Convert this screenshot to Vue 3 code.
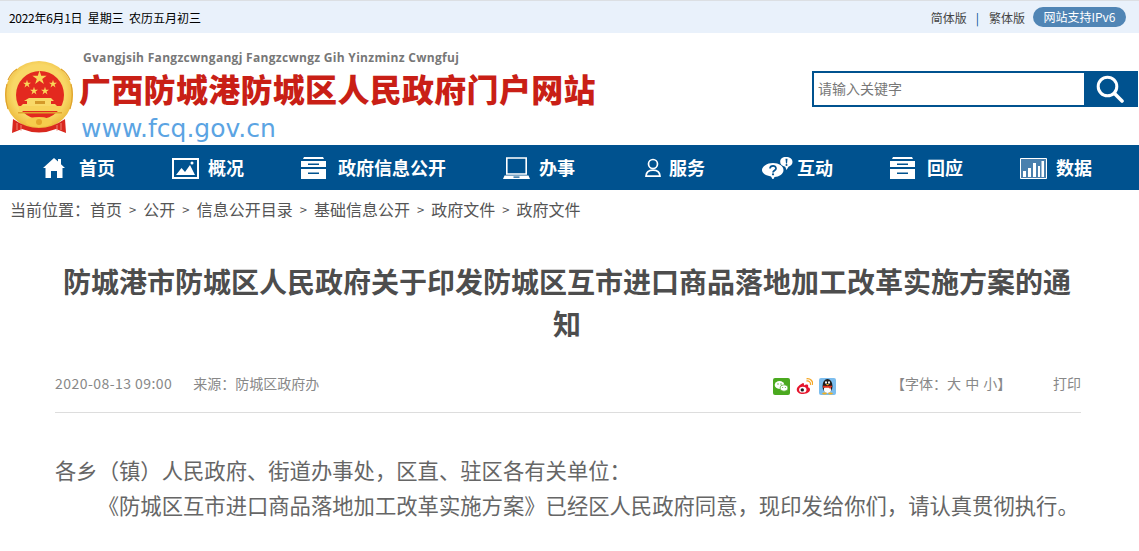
<template>
  <div class="page">
    <!-- 顶部日期条 -->
    <div class="topbar">
      <span class="date"><b class="date-day">2022年6月1日</b>&nbsp;&nbsp;星期三&nbsp;&nbsp;农历五月初三</span>
      <div class="topbar-right">
        <a class="lang">简体版</a>
        <i class="lang-sep">|</i>
        <a class="lang">繁体版</a>
        <span class="ipv6">网站支持IPv6</span>
      </div>
    </div>

    <!-- 网站头部 -->
    <header class="header">
      <svg class="emblem" viewBox="0 0 70 74" width="70" height="74">
        <defs>
          <radialGradient id="gold" cx="50%" cy="45%" r="55%">
            <stop offset="72%" stop-color="#f8d766" />
            <stop offset="100%" stop-color="#ecb93a" />
          </radialGradient>
          <path id="star" d="M0-1L.225-.309H.951L.363.118.588.809 0 .382-.588.809-.363.118-.951-.309H-.225z" />
        </defs>
        <circle cx="35" cy="35" r="34" fill="url(#gold)" />
        <path d="M3 24Q0 36 4 49M67 24Q70 36 66 49M13 9Q7 13 4 20M57 9Q63 13 66 20" stroke="#dfa32c" stroke-width="1.200" fill="none" />
        <circle cx="36" cy="35" r="24" fill="#e3291f" />
        <g fill="#f9d75a">
          <use href="#star" transform="translate(35.500 18) scale(7.500)" />
          <use href="#star" transform="translate(23 24) scale(4.200)" />
          <use href="#star" transform="translate(49 24) scale(4.200)" />
          <use href="#star" transform="translate(30 31) scale(4.200)" />
          <use href="#star" transform="translate(41 31) scale(4.200)" />
        </g>
        <path d="M25 38h22l3 3h-3v3h4l2 2H17l2-2h4v-3h-3z" fill="#f9d968" />
        <path d="M15 46h42v5H15z" fill="#f7d25a" />
        <path d="M31 41h10v3H31z" fill="#d49a2a" />
        <path d="M14 52h44v1.500H14z" fill="#dfa32c" />
        <path d="M9 59Q22 68 35 68T61 59L62 73 52 69Q35 76 18 69L8 73z" fill="#d9281e" />
        <path d="M13 63v7M17 65v6M53 65v6M57 63v7" stroke="#f3a08a" stroke-width=".8" />
        <ellipse cx="35" cy="62" rx="13" ry="5" fill="#f6cd4c" />
        <circle cx="35" cy="62" r="3" fill="#e4a62a" />
      </svg>
      <div class="brand">
        <p class="brand-zhuang">Gvangjsih Fangzcwngangj Fangzcwngz Gih Yinzminz Cwngfuj</p>
        <h1 class="brand-name">广西防城港防城区人民政府门户网站</h1>
        <p class="brand-url">www.fcq.gov.cn</p>
      </div>
      <div class="search">
        <input class="search-input" type="text" placeholder="请输入关键字" />
        <button class="search-btn" aria-label="搜索">
          <svg viewBox="0 0 28 28" width="28" height="28">
            <circle cx="11.500" cy="11.500" r="9.300" fill="none" stroke="#fff" stroke-width="3" />
            <path d="M18.500 18.500L26 26" stroke="#fff" stroke-width="3.600" stroke-linecap="round" />
          </svg>
        </button>
      </div>
    </header>

    <!-- 主导航 -->
    <nav class="nav">
      <a class="nav-item gap-14">
        <svg viewBox="0 0 22 22" width="22" height="22">
          <path fill="#fff" d="M11 1l4 3.500V2h3v5.200L22 11h-2.500v10H14v-7H8v7H2.500V11H0z" />
        </svg>
        首页
      </a>
      <a class="nav-item gap-9">
        <svg viewBox="0 0 27 22" width="27" height="22">
          <path fill="none" stroke="#fff" stroke-width="2" d="M1 2h25v19H1z" />
          <path fill="#fff" d="M4 18l5.500-7 3.500 4 5-7 5 10z" />
          <circle cx="20" cy="6" r="1.500" fill="#fff" />
        </svg>
        概况
      </a>
      <a class="nav-item gap-12">
        <svg viewBox="0 0 25 22" width="25" height="22">
          <path fill="#fff" d="M3 0h19l1 2H2zM0 4h25v6H0zM0 12h25v10H0z" />
          <path fill="#00528f" d="M7 6.500h11v1.500H7zM7 15.500h11v1.500H7z" />
        </svg>
        政府信息公开
      </a>
      <a class="nav-item gap-9">
        <svg viewBox="0 0 27 22" width="27" height="22">
          <path fill="none" stroke="#fff" stroke-width="1.600" d="M3.800 1h19.400v16H3.800z" />
          <path fill="#fff" d="M1.500 18.500h24L27 22H0z" />
          <path fill="#00528f" d="M10.500 19.500h6v1.200h-6z" />
        </svg>
        办事
      </a>
      <a class="nav-item gap-8 nudge">
        <svg viewBox="0 0 16 19" width="16" height="19">
          <circle cx="8" cy="6" r="4.500" fill="none" stroke="#fff" stroke-width="1.700" />
          <path d="M1 18.100c.2-4 3-6 7-6s6.800 2 7 6z" fill="none" stroke="#fff" stroke-width="1.700" />
        </svg>
        服务
      </a>
      <a class="nav-item gap-3">
        <svg viewBox="0 0 32 22" width="32" height="22">
          <path fill="#fff" d="M11 6c6 0 10.500 3 10.500 7S17 20 12.500 20L11 23l-2-3.500C4 18.500 0 16.500 0 13s5-7 11-7z" />
          <path fill="#fff" d="M24 0c3.800 0 6.500 1.800 6.500 5 0 2.500-2 4.200-4 4.700L24.500 13l-1.300-3.300c-3-.5-5-2.200-5-4.700 0-3.200 2-5 5.800-5z" />
          <path fill="none" stroke="#00528f" stroke-width="1.700" d="M8 11.500c.2-3.500 6-3.500 6 0 0 2-3 2-3 4" />
          <circle cx="11" cy="17.300" r="1.100" fill="#00528f" />
          <path fill="#00528f" d="M23.500 1.700h2L25 6.500h-1z" />
          <circle cx="24.500" cy="8" r="1" fill="#00528f" />
        </svg>
        互动
      </a>
      <a class="nav-item gap-12">
        <svg viewBox="0 0 25 22" width="25" height="22">
          <path fill="#fff" d="M3 0h19l1 2H2zM0 4h25v6H0zM0 12h25v10H0z" />
          <path fill="#00528f" d="M7 6.500h11v1.500H7zM7 15.500h11v1.500H7z" />
        </svg>
        回应
      </a>
      <a class="nav-item gap-9">
        <svg viewBox="0 0 27 22" width="27" height="22">
          <path fill="#4a80ae" stroke="#fff" d="M.5 1.500h26v20H.5z" />
          <path fill="#fff" d="M3 14h3v6H3zM8 11h3v9H8zM13 6h3v14h-3zM18 9h2v11h-2zM21.500 4H24v16h-2.500z" />
        </svg>
        数据
      </a>
    </nav>

    <!-- 面包屑 -->
    <div class="crumbs">
      <span class="crumbs-label">当前位置：</span>
      <template v-for="(c, i) in crumbs" :key="i">
        <em v-if="i > 0" class="crumbs-sep">&gt;</em>
        <a>{{ c }}</a>
      </template>
    </div>

    <!-- 正文 -->
    <main class="article">
      <h2 class="article-title">防城港市防城区人民政府关于印发防城区互市进口商品落地加工改革实施方案的通知</h2>
      <div class="meta">
        <div class="meta-source">
          <span class="meta-date">2020-08-13 09:00</span>
          <span>来源：防城区政府办</span>
        </div>
        <div class="share">
          <svg viewBox="0 0 17 17" width="17" height="17">
            <rect width="17" height="17" rx="2" fill="#4aa91f" />
            <ellipse cx="6.500" cy="7" rx="4.800" ry="3.900" fill="#fff" />
            <ellipse cx="11" cy="10" rx="4" ry="3.200" fill="#fff" stroke="#4aa91f" stroke-width=".7" />
            <circle cx="5" cy="6" r=".7" fill="#4aa91f" />
            <circle cx="8" cy="6" r=".7" fill="#4aa91f" />
            <circle cx="9.700" cy="9.500" r=".5" fill="#4aa91f" />
            <circle cx="12.300" cy="9.500" r=".5" fill="#4aa91f" />
          </svg>
          <svg viewBox="0 0 17 17" width="17" height="17">
            <path d="M7 5C3.500 6.500.5 9.500.8 12c.3 2.600 3.200 4.200 6.500 4 3.700-.2 6.700-2 6.700-4.500 0-1.500-1.200-2-2-2.200.5-1.500.1-2.500-1-2.700-1-.2-2 .3-3 .8.300-1.500 0-2.400-1-2.400z" fill="#e6162d" />
            <ellipse cx="6.800" cy="11.700" rx="3.700" ry="2.900" fill="#fff" />
            <circle cx="6.300" cy="11.900" r="1.700" fill="#222" />
            <path d="M10.500 3c2.500-.5 4.500 1.500 4 4M10.500.8c4-.6 6.800 2.500 6 6.200" fill="none" stroke="#f5a623" stroke-width="1.300" />
          </svg>
          <svg viewBox="0 0 17 17" width="17" height="17">
            <rect width="17" height="17" rx="2" fill="#7cbdee" />
            <ellipse cx="8.500" cy="8" rx="5" ry="7" fill="#1d1d1d" />
            <ellipse cx="8.500" cy="11.500" rx="3.600" ry="3.500" fill="#fff" />
            <ellipse cx="7" cy="4.500" rx="1" ry="1.300" fill="#fff" />
            <ellipse cx="10" cy="4.500" rx="1" ry="1.300" fill="#fff" />
            <path d="M6.700 6h3.600l-1.800 1.500z" fill="#f4b01f" />
            <path d="M4 7.800h9v1.200l-1.500.5v2l-1.500-1.800H4z" fill="#e2331f" />
            <ellipse cx="5.500" cy="15.400" rx="2.400" ry="1" fill="#f4b01f" />
            <ellipse cx="11.500" cy="15.400" rx="2.400" ry="1" fill="#f4b01f" />
          </svg>
        </div>
        <div class="fontsize">【字体：<a>大</a> <a>中</a> <a>小</a>】</div>
        <a class="print">打印</a>
      </div>
      <div class="content">
        <p>各乡（镇）人民政府、街道办事处，区直、驻区各有关单位：</p>
        <p class="indent">《防城区互市进口商品落地加工改革实施方案》已经区人民政府同意，现印发给你们，请认真贯彻执行。</p>
      </div>
    </main>
  </div>
</template>

<script setup>
const crumbs = ['首页', '公开', '信息公开目录', '基础信息公开', '政府文件', '政府文件']
</script>

<style>
body {
  background: #fff;
  overflow: hidden;
}
</style>

<style scoped>
.page {
  width: 1139px;
  height: 551px;
  overflow: hidden;
  font-family: "Noto Sans CJK SC", "Liberation Sans", sans-serif;
  color: #555;
}

.topbar {
  box-sizing: border-box;
  height: 33px;
  border-top: 1px solid #dcdfe3;
  background: #e9f1fb;
  padding: 0 13px 0 9px;
  display: flex;
  align-items: center;
  justify-content: space-between;
  font-size: 12px;
}

.date {
  color: #000;
}

.date-day {
  font-weight: 400;
  letter-spacing: -0.3px;
}

.topbar-right {
  display: flex;
  align-items: center;
}

.lang {
  color: #444;
}

.lang-sep {
  font-style: normal;
  color: #00528f;
  margin: 0 10px 0 9px;
}

.ipv6 {
  margin-left: 8px;
  width: 93px;
  height: 20px;
  line-height: 20px;
  border-radius: 10px;
  background: #5085b5;
  color: #fff;
  text-align: center;
}

.header {
  height: 112px;
  display: flex;
  align-items: flex-start;
}

.emblem {
  flex: none;
  margin: 27px 0 0 4px;
}

.brand {
  margin: 16px 0 0 5px;
}

.brand-zhuang {
  margin: 0 0 0 4px;
  font-family: "Open Sans", sans-serif;
  font-size: 12px;
  font-weight: 700;
  letter-spacing: 0.3px;
  line-height: 18px;
  color: #777;
}

.brand-name {
  margin: -2px 0 2px;
  font-size: 32px;
  font-weight: 900;
  letter-spacing: 0.3px;
  line-height: 46px;
  color: #c91f16;
  white-space: nowrap;
}

.brand-url {
  margin: 0 0 0 2px;
  font-family: "DejaVu Sans", sans-serif;
  font-size: 25px;
  line-height: 32px;
  color: #5ba4e3;
}

.search {
  box-sizing: border-box;
  margin: 38px 1px 0 auto;
  width: 326px;
  height: 36px;
  border: 2px solid #00528f;
  display: flex;
}

.search-input {
  flex: 1;
  min-width: 0;
  border: 0;
  outline: 0;
  padding: 0 4px 2px;
  font-family: inherit;
  font-size: 14px;
  color: #555;
}

.search-input::placeholder {
  color: #777;
}

.search-btn {
  flex: none;
  width: 52px;
  border: 0;
  padding: 0;
  background: #00528f;
  display: flex;
  align-items: center;
  justify-content: center;
}

.nav {
  box-sizing: border-box;
  height: 45px;
  background: #00528f;
  padding: 0 0 2px 43px;
  display: flex;
  align-items: center;
  gap: 57px;
}

.nav-item {
  display: flex;
  align-items: center;
  color: #fff;
  font-size: 18px;
  font-weight: 700;
  white-space: nowrap;
}

.nav-item svg {
  flex: none;
  margin-top: 2px;
}

.gap-3 { gap: 3px; }
.gap-8 { gap: 8px; }
.gap-9 { gap: 9px; }
.gap-12 { gap: 12px; }
.gap-14 { gap: 14px; }

.nudge {
  margin-left: 13px;
}

.crumbs {
  box-sizing: border-box;
  height: 40px;
  padding: 0 0 2px 10px;
  display: flex;
  align-items: center;
  gap: 7px;
  font-size: 16px;
  color: #555;
}

.crumbs-label {
  margin-right: -7px;
}

.crumbs-sep {
  width: 7.300px;
  font-style: normal;
  font-size: 13px;
}

.article {
  margin: 0 58px 0 55px;
}

.article-title {
  margin: 30px 0 0;
  padding-right: 2px;
  font-size: 28px;
  font-weight: 700;
  line-height: 42px;
  text-align: center;
  color: #4d4d4d;
}

.meta {
  box-sizing: border-box;
  margin-top: 22px;
  height: 47px;
  padding-bottom: 13px;
  border-bottom: 1px solid #ddd;
  display: grid;
  grid-template-columns: 718px 118px 1fr auto;
  align-items: center;
  font-size: 14px;
  color: #888;
}

.meta-source {
  display: flex;
  gap: 21px;
}

.meta-date {
  letter-spacing: 0.45px;
}

.share {
  display: flex;
  gap: 6px;
  padding-top: 8px;
}

.fontsize {
  word-spacing: 1px;
}

.content {
  margin-top: 39px;
  font-size: 21.330px;
  line-height: 35px;
  color: #666;
}

.content p {
  margin: 0;
}

.indent {
  text-indent: 2em;
  white-space: nowrap;
}
</style>
